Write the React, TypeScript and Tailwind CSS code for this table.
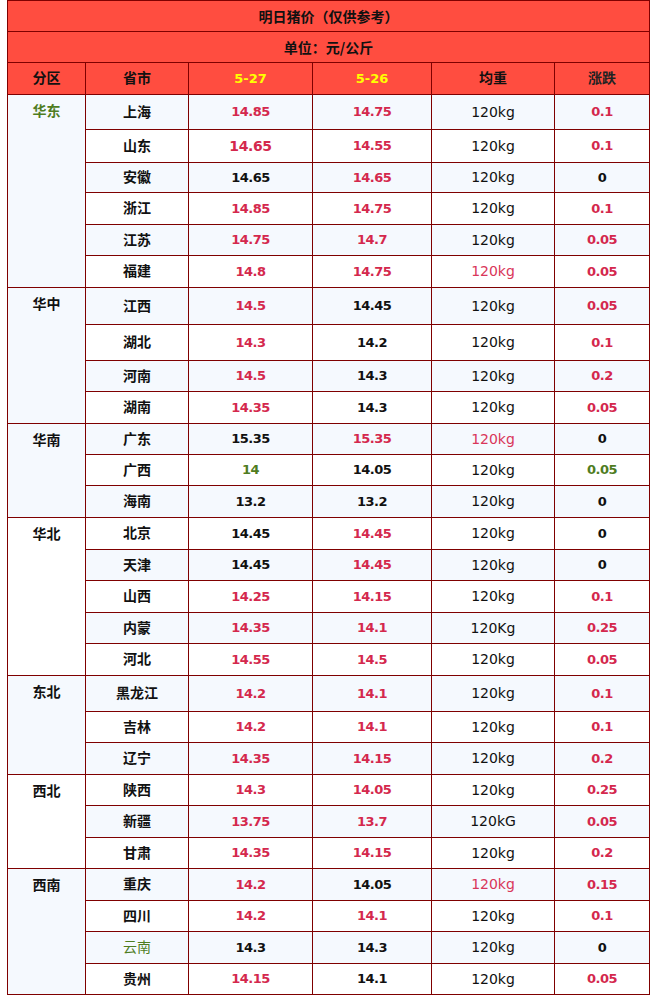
import React from 'react';

// colour codes: r = red, k = black, g = green
type Row = {
  prov: string;
  provGreen?: boolean;
  h: number;
  a: string;
  b: string;
  w: string;
  d: string;
  big?: boolean;
};

type Group = { name: string; green?: boolean; rows: Row[] };

const groups: Group[] = [
  {
    name: '华东',
    green: true,
    rows: [
      { prov: '上海', h: 35, a: 'r14.85', b: 'r14.75', w: 'k120kg', d: 'r0.1' },
      { prov: '山东', h: 33, a: 'r14.65', b: 'r14.55', w: 'k120kg', d: 'r0.1', big: true },
      { prov: '安徽', h: 30, a: 'k14.65', b: 'r14.65', w: 'k120kg', d: 'k0' },
      { prov: '浙江', h: 32, a: 'r14.85', b: 'r14.75', w: 'k120kg', d: 'r0.1' },
      { prov: '江苏', h: 31, a: 'r14.75', b: 'r14.7', w: 'k120kg', d: 'r0.05' },
      { prov: '福建', h: 32, a: 'r14.8', b: 'r14.75', w: 'r120kg', d: 'r0.05' },
    ],
  },
  {
    name: '华中',
    rows: [
      { prov: '江西', h: 37, a: 'r14.5', b: 'k14.45', w: 'k120kg', d: 'r0.05' },
      { prov: '湖北', h: 36, a: 'r14.3', b: 'k14.2', w: 'k120kg', d: 'r0.1' },
      { prov: '河南', h: 31, a: 'r14.5', b: 'k14.3', w: 'k120kg', d: 'r0.2' },
      { prov: '湖南', h: 32, a: 'r14.35', b: 'k14.3', w: 'k120kg', d: 'r0.05' },
    ],
  },
  {
    name: '华南',
    rows: [
      { prov: '广东', h: 31, a: 'k15.35', b: 'r15.35', w: 'r120kg', d: 'k0' },
      { prov: '广西', h: 31, a: 'g14', b: 'k14.05', w: 'k120kg', d: 'g0.05' },
      { prov: '海南', h: 32, a: 'k13.2', b: 'k13.2', w: 'k120kg', d: 'k0' },
    ],
  },
  {
    name: '华北',
    rows: [
      { prov: '北京', h: 32, a: 'k14.45', b: 'r14.45', w: 'k120kg', d: 'k0' },
      { prov: '天津', h: 31, a: 'k14.45', b: 'r14.45', w: 'k120kg', d: 'k0' },
      { prov: '山西', h: 32, a: 'r14.25', b: 'r14.15', w: 'k120kg', d: 'r0.1' },
      { prov: '内蒙', h: 31, a: 'r14.35', b: 'r14.1', w: 'k120Kg', d: 'r0.25' },
      { prov: '河北', h: 32, a: 'r14.55', b: 'r14.5', w: 'k120kg', d: 'r0.05' },
    ],
  },
  {
    name: '东北',
    rows: [
      { prov: '黑龙江', h: 36, a: 'r14.2', b: 'r14.1', w: 'k120kg', d: 'r0.1' },
      { prov: '吉林', h: 31, a: 'r14.2', b: 'r14.1', w: 'k120kg', d: 'r0.1' },
      { prov: '辽宁', h: 32, a: 'r14.35', b: 'r14.15', w: 'k120kg', d: 'r0.2' },
    ],
  },
  {
    name: '西北',
    rows: [
      { prov: '陕西', h: 31, a: 'r14.3', b: 'r14.05', w: 'k120kg', d: 'r0.25' },
      { prov: '新疆', h: 32, a: 'r13.75', b: 'r13.7', w: 'k120kG', d: 'r0.05' },
      { prov: '甘肃', h: 31, a: 'r14.35', b: 'r14.15', w: 'k120kg', d: 'r0.2' },
    ],
  },
  {
    name: '西南',
    rows: [
      { prov: '重庆', h: 32, a: 'r14.2', b: 'k14.05', w: 'r120kg', d: 'r0.15' },
      { prov: '四川', h: 31, a: 'r14.2', b: 'r14.1', w: 'k120kg', d: 'r0.1' },
      { prov: '云南', provGreen: true, h: 32, a: 'k14.3', b: 'k14.3', w: 'k120kg', d: 'k0' },
      { prov: '贵州', h: 31, a: 'r14.15', b: 'k14.1', w: 'k120kg', d: 'r0.05' },
    ],
  },
];

const numColor = (code: string) =>
  code[0] === 'r' ? 'text-[#d4284d]' : code[0] === 'g' ? 'text-[#4f7d1f]' : 'text-[#111]';

const Num = ({ code, big }: { code: string; big?: boolean }) => (
  <span
    className={`${numColor(code)} font-bold ${big ? 'text-[14px] tracking-[-0.4px]' : 'text-[13px] tracking-[-0.5px]'}`}
  >
    {code.slice(1)}
  </span>
);

const cell = 'flex items-center justify-center border-r border-[#7f0000]';

export default function App() {
  let idx = 0;
  return (
    <div className="bg-white w-[656px] h-[1001px] pl-[7px] font-['DejaVu_Sans','Noto_Sans_CJK_SC',sans-serif]">
      <div className="w-[643px] border-l border-r border-t border-[#7f0000]">
        <div className="h-[31px] border-b border-[#7f0000] bg-[#ff4d40] flex items-center justify-center font-['Noto_Sans_CJK_SC',sans-serif] font-bold text-[14px] text-[#111]">
          明日猪价（仅供参考）
        </div>
        <div className="h-[31px] border-b border-[#7f0000] bg-[#ff4d40] flex items-center justify-center font-['Noto_Sans_CJK_SC',sans-serif] font-bold text-[14px] text-[#111]">
          单位：元/公斤
        </div>
        <div className="h-[32px] border-b border-[#7f0000] bg-[#ff4d40] flex text-[14px] font-bold">
          <div className={`${cell} w-[78px] text-[#111]`}>分区</div>
          <div className={`${cell} w-[103px] text-[#111]`}>省市</div>
          <div className={`${cell} w-[124px] text-[#ffff00] text-[13px]`}>5-27</div>
          <div className={`${cell} w-[119px] text-[#ffff00] text-[13px]`}>5-26</div>
          <div className={`${cell} w-[123px] text-[#111]`}>均重</div>
          <div className="flex items-center justify-center w-[94px] text-[#222]">涨跌</div>
        </div>

        {groups.map((g) => {
          const first = idx;
          return (
            <div key={g.name} className="flex">
              <div
                className={`w-[78px] shrink-0 border-r border-b border-[#7f0000] ${first % 2 === 0 ? 'bg-[#f5f9fe]' : 'bg-white'}`}
              >
                <div
                  className={`h-[33px] flex items-center justify-center text-[14px] font-bold ${g.green ? 'text-[#4f7d1f]' : 'text-[#111]'}`}
                >
                  {g.name}
                </div>
              </div>
              <div className="flex flex-col">
                {g.rows.map((r) => {
                  const i = idx++;
                  return (
                    <div
                      key={r.prov}
                      style={{ height: r.h }}
                      className={`flex border-b border-[#7f0000] ${i % 2 === 0 ? 'bg-[#f5f9fe]' : 'bg-white'}`}
                    >
                      <div
                        className={`${cell} w-[103px] text-[14px] ${r.provGreen ? 'text-[#4f7d1f] font-normal' : 'text-[#111] font-bold'}`}
                      >
                        {r.prov}
                      </div>
                      <div className={`${cell} w-[124px]`}>
                        <Num code={r.a} big={r.big} />
                      </div>
                      <div className={`${cell} w-[119px]`}>
                        <Num code={r.b} />
                      </div>
                      <div
                        className={`${cell} w-[123px] text-[14px] ${r.w[0] === 'r' ? 'text-[#d9365a]' : 'text-[#111]'}`}
                      >
                        {r.w.slice(1)}
                      </div>
                      <div className="flex items-center justify-center w-[94px]">
                        <Num code={r.d} />
                      </div>
                    </div>
                  );
                })}
              </div>
            </div>
          );
        })}
      </div>
    </div>
  );
}
